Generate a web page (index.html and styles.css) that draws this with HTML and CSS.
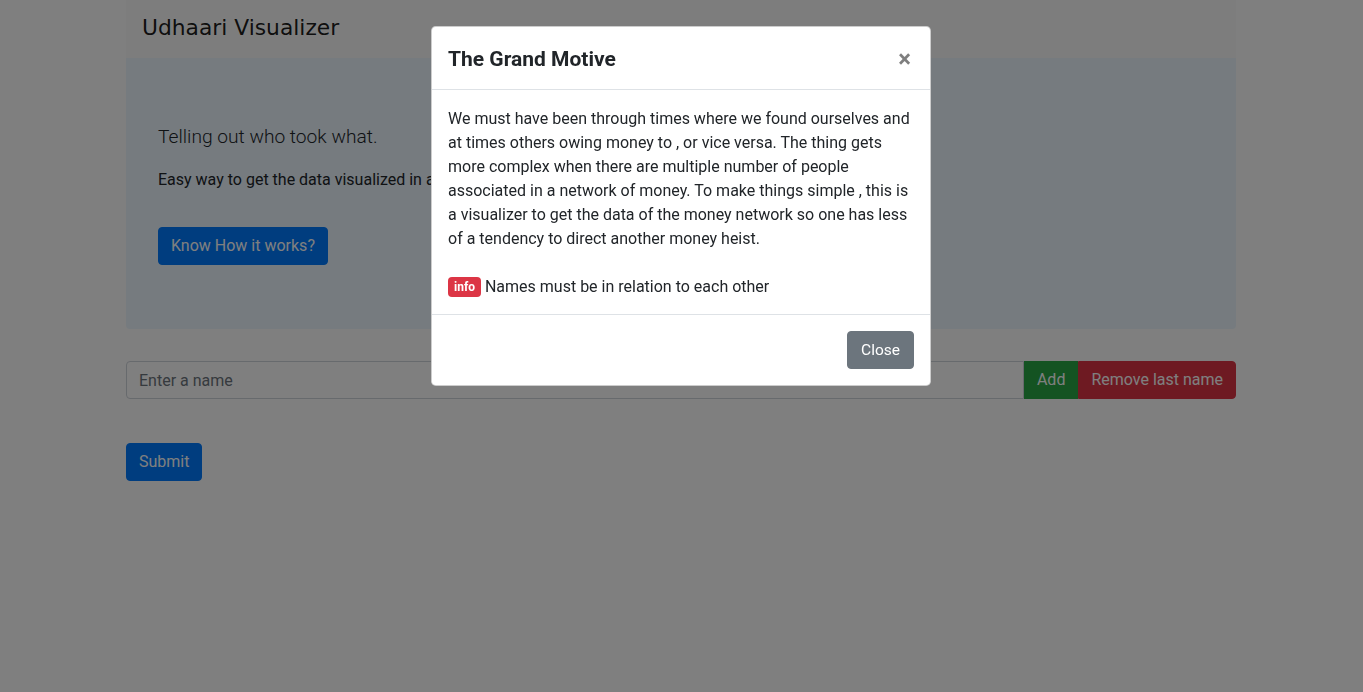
FILE: index.html
```html
<!DOCTYPE html>
<html lang="en">
<head>
<meta charset="utf-8">
<title>Udhaari Visualizer</title>
<link rel="stylesheet" href="styles.css">
</head>
<body>
<div class="container">
  <nav class="navbar">
    <span class="brand">Udhaari Visualizer</span>
  </nav>
  <div class="jumbotron">
    <p class="lead">Telling out who took what.</p>
    <p class="desc">Easy way to get the data visualized in a network graph to see who owes whom and how much.</p>
    <button class="btn btn-primary">Know How it works?</button>
  </div>
  <div class="input-group">
    <input class="form-control" type="text" placeholder="Enter a name">
    <button class="btn btn-success btn-flat">Add</button>
    <button class="btn btn-danger btn-end">Remove last name</button>
  </div>
  <button class="btn btn-primary submit">Submit</button>
</div>

<div class="backdrop"></div>

<div class="modal">
  <div class="modal-content">
    <div class="modal-header">
      <h5 class="modal-title">The Grand Motive</h5>
      <span class="close">&times;</span>
    </div>
    <div class="modal-body">
      <p>We must have been through times where we found ourselves and at times others owing money to , or vice versa. The thing gets more complex when there are multiple number of people associated in a network of money. To make things simple , this is a visualizer to get the data of the money network so one has less of a tendency to direct another money heist.<br><br><span class="badge">info</span> Names must be in relation to each other</p>
    </div>
    <div class="modal-footer">
      <button class="btn btn-secondary">Close</button>
    </div>
  </div>
</div>
</body>
</html>
```

FILE: styles.css
```css
* { box-sizing: border-box; }
html, body { margin: 0; }
body {
  width: 1362px;
  font-family: Roboto, "Noto Sans", sans-serif;
  font-size: 16px;
  line-height: 1.5;
  color: #212529;
  background: #fff;
  height: 692px;
  overflow: hidden;
}
.container {
  width: 1140px;
  margin: 0 auto;
  padding: 0 15px;
}
.navbar {
  background: #fafafa;
  padding: 8px 16px 10px;
}
.brand {
  display: inline-block;
  font-family: "DejaVu Sans", Verdana, sans-serif;
  font-size: 21.8px;
  line-height: 30px;
  padding: 5px 0;
  color: rgba(0,0,0,.9);
}
.jumbotron {
  background: #ecf6ff;
  padding: 64px 32px;
  margin-bottom: 32px;
  border-radius: 0 0 4px 4px;
}
.lead {
  font-size: 19.2px;
  font-weight: 300;
  line-height: 30px;
  margin: 0 0 16px;
}
.desc { margin: 0 0 35px; }
.btn {
  display: inline-block;
  font-family: inherit;
  font-size: 16px;
  line-height: 24px;
  padding: 6px 12px;
  border: 1px solid transparent;
  border-radius: 4px;
  color: #fff;
  cursor: pointer;
}
.btn-primary { background: #007bff; border-color: #007bff; }
.btn-success { background: #28a745; border-color: #28a745; }
.btn-danger { background: #dc3545; border-color: #dc3545; }
.btn-secondary { background: #6c757d; border-color: #6c757d; }
.input-group {
  display: flex;
  margin-bottom: 44px;
}
.form-control {
  flex: 1;
  font-family: inherit;
  font-size: 16px;
  line-height: 24px;
  height: 38px;
  padding: 6px 12px;
  border: 1px solid #ced4da;
  border-radius: 4px 0 0 4px;
  color: #495057;
  background: #fff;
}
.form-control::placeholder { color: #6c757d; }
.btn-flat { border-radius: 0; }
.btn-end { border-radius: 0 4px 4px 0; }
.backdrop {
  position: fixed;
  inset: 0;
  background: rgba(0,0,0,.5);
}
.modal {
  position: fixed;
  inset: 0;
  width: 1362px;
}
.modal-content {
  width: 500px;
  margin: 26px auto 0;
  background: #fff;
  border: 1px solid rgba(0,0,0,.2);
  border-radius: 4.8px;
}
.modal-header {
  display: flex;
  align-items: flex-start;
  justify-content: space-between;
  padding: 17px 16px 15px;
  border-bottom: 1px solid #dee2e6;
}
.modal-title {
  margin: 0;
  font-size: 21px;
  font-weight: 700;
  line-height: 30px;
}
.close {
  font-size: 24px;
  font-weight: 700;
  line-height: 30px;
  color: #000;
  opacity: .5;
  margin-right: 3px;
}
.modal-body { padding: 17px 16px 15px; }
.modal-body p { margin: 0; }
.badge {
  display: inline-block;
  background: #dc3545;
  color: #fff;
  font-size: 12px;
  font-weight: 700;
  line-height: 1;
  padding: 4px 6px;
  border-radius: 4px;
  vertical-align: 1px;
}
.modal-footer {
  display: flex;
  justify-content: flex-end;
  padding: 12px;
  border-top: 1px solid #dee2e6;
}
.modal-footer .btn { margin: 4px; padding: 6px 13px; font-size: 15.5px; }
```
